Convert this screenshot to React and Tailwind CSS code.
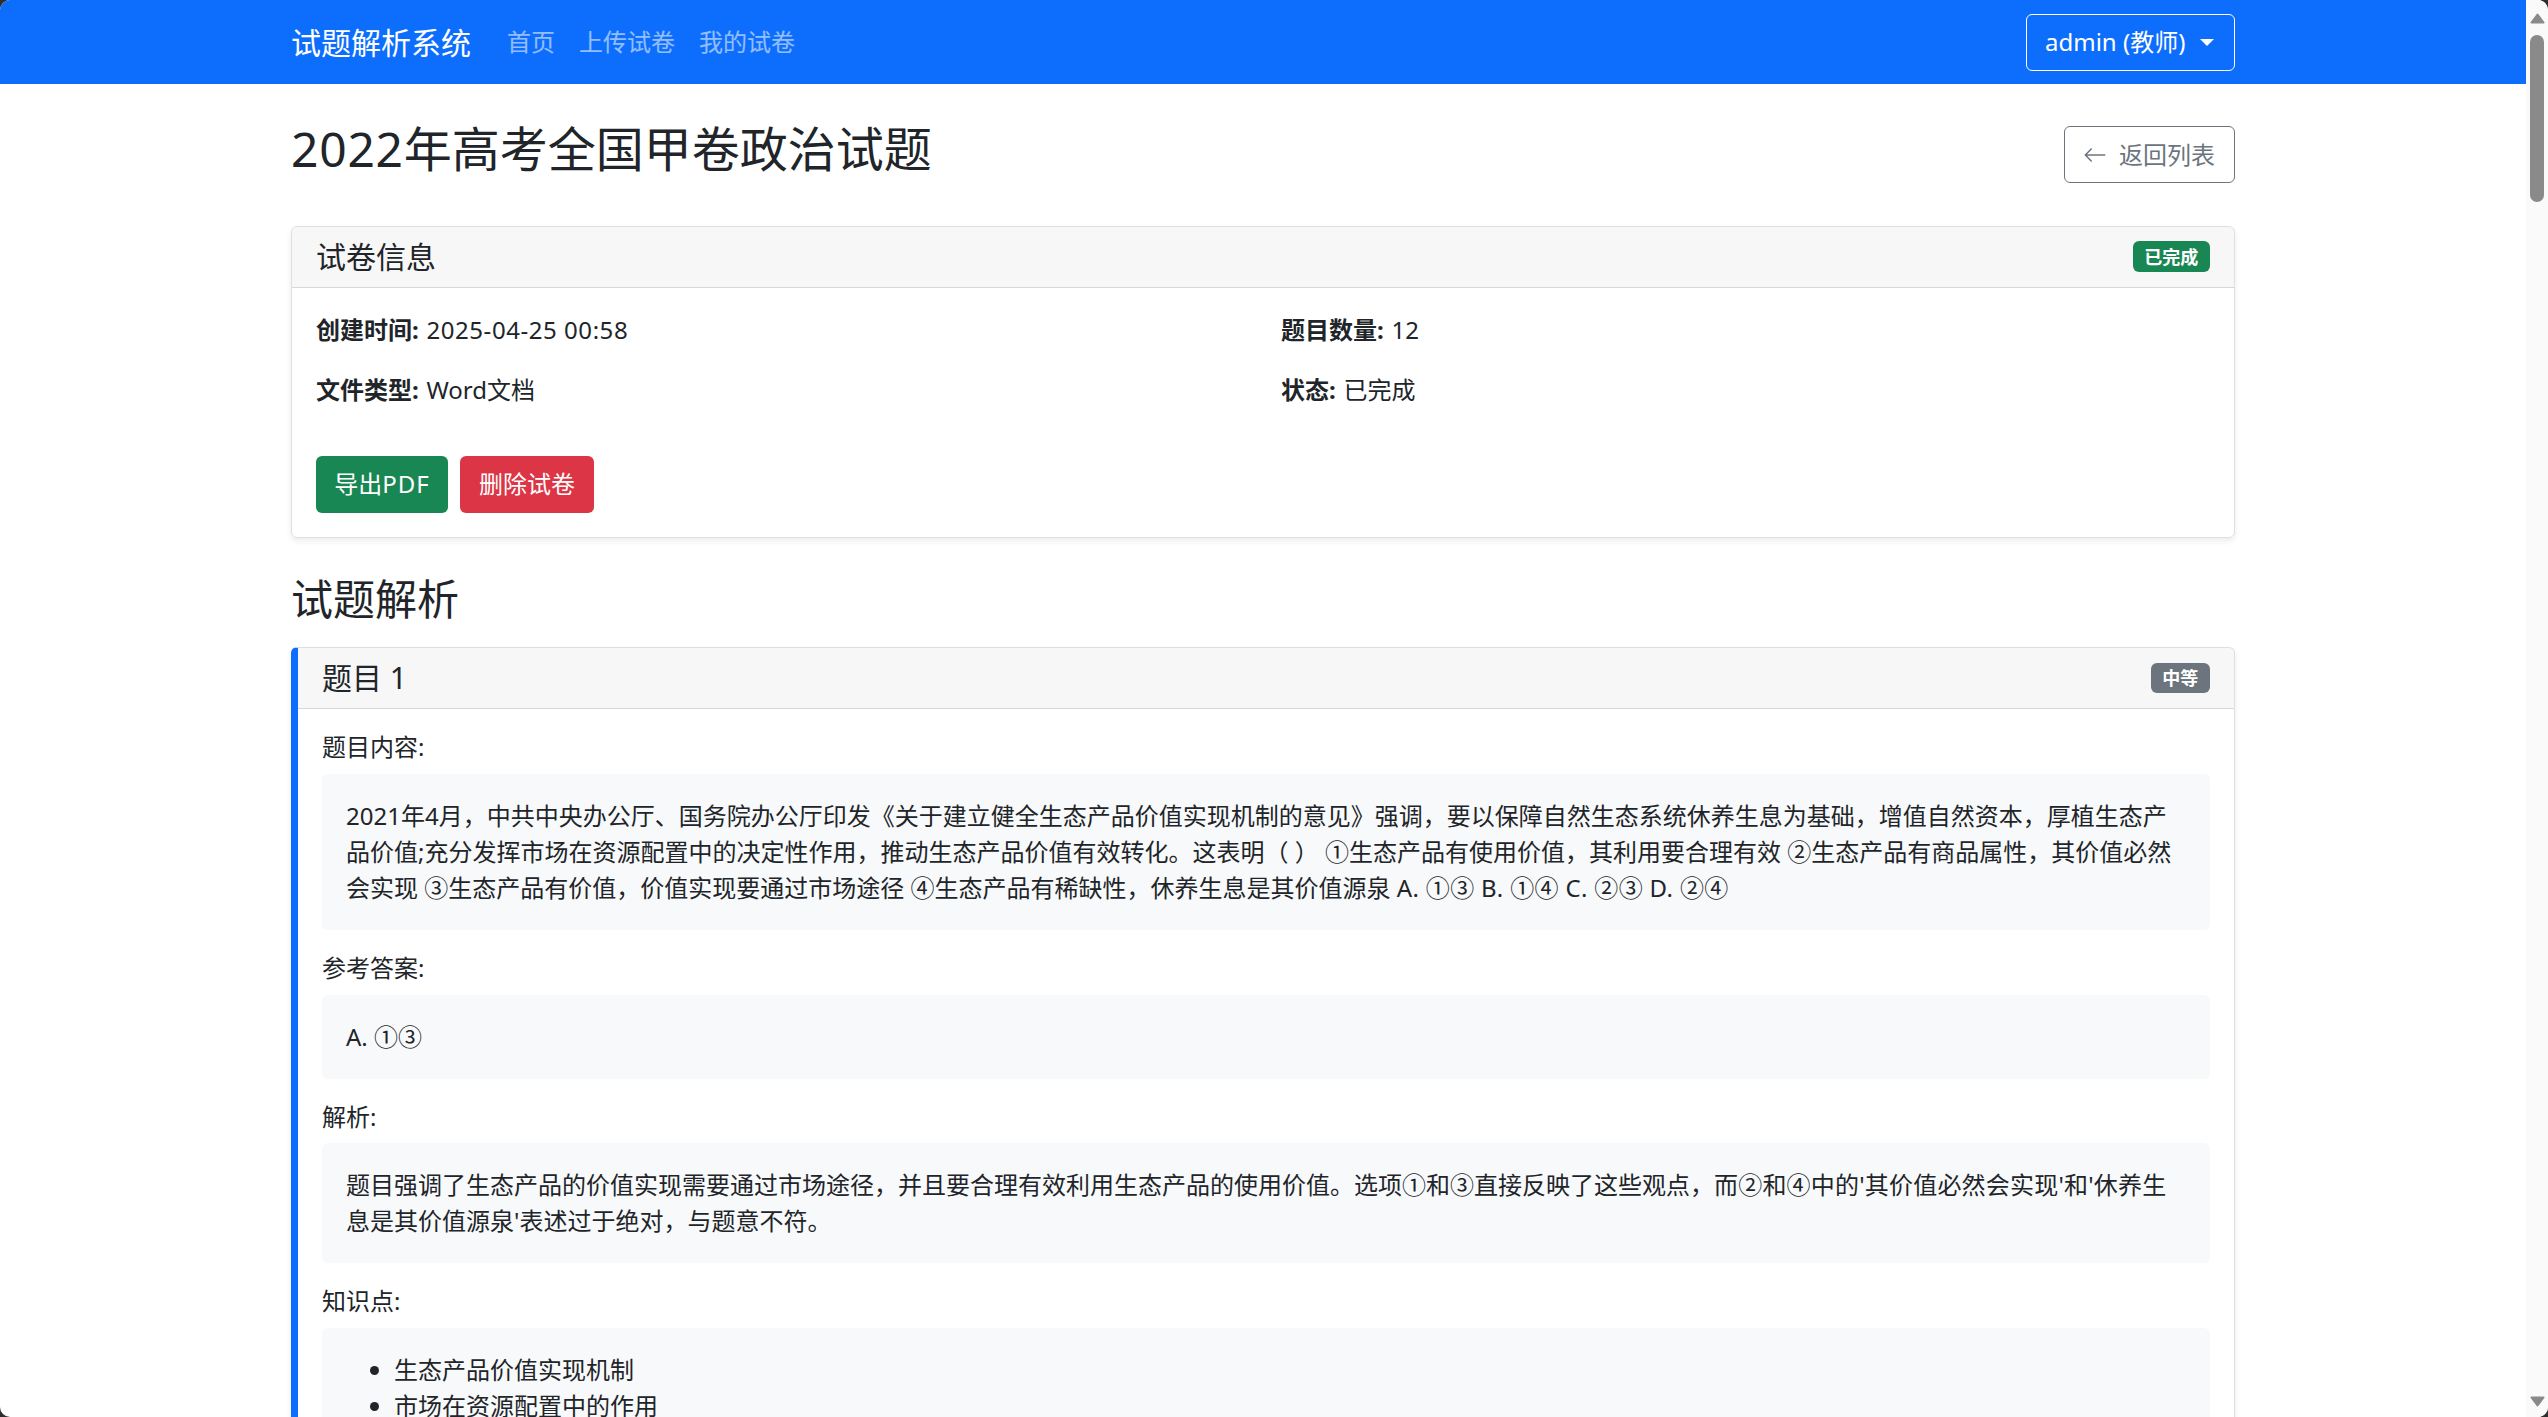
import { BsArrowLeft } from 'react-icons/bs'

const stack = "font-['Noto_Sans','Noto_Sans_CJK_SC',sans-serif]"

const ScrollBar = () => (
  <div className="flex h-full w-[22px] shrink-0 flex-col items-center bg-[#fafafa]">
    <svg width="15" height="11" viewBox="0 0 15 11" className="mt-[13px] shrink-0"><path d="M7.5 1.5 L13.5 9.5 H1.5 Z" fill="#8a8a8a" stroke="#8a8a8a" strokeWidth="2" strokeLinejoin="round" /></svg>
    <div className="mt-[11px] h-[167px] w-[14px] shrink-0 rounded-full bg-[#8a8a8a]" />
    <div className="flex-1" />
    <svg width="15" height="11" viewBox="0 0 15 11" className="mb-[10px] shrink-0"><path d="M1.5 1.5 H13.5 L7.5 9.5 Z" fill="#8a8a8a" stroke="#8a8a8a" strokeWidth="2" strokeLinejoin="round" /></svg>
  </div>
)

const Badge = ({ color, children }) => (
  <span className={`rounded-[6px] px-[11.7px] py-[6.3px] text-[18px] leading-[18px] font-bold text-white ${color}`}>{children}</span>
)

const CardHeader = ({ title, badge, color }) => (
  <div className="flex items-center justify-between border-b border-black/[.125] bg-black/[.03] px-[24px] py-[12px]">
    <h5 className="text-[30px] leading-[36px] font-normal">{title}</h5>
    <Badge color={color}>{badge}</Badge>
  </div>
)

const Section = ({ label, children, last }) => (
  <div className={last ? '' : 'mb-[24px]'}>
    <h6 className="mb-[12px] text-[24px] leading-[28.8px] font-normal">{label}</h6>
    <div className="rounded-[6px] bg-[#f8f9fa] p-[24px]">{children}</div>
  </div>
)

const Info = ({ label, value, wide }) => (
  <p className="mb-[24px]">
    <strong className="mr-[1.5px] font-bold">{label}:</strong> <span className={wide ? 'tracking-[0.55px]' : ''}>{value}</span>
  </p>
)

export default function App() {
  return (
    <div className="h-[1417px] overflow-hidden bg-[#2e2e2e]">
      <div className={`flex h-full overflow-hidden rounded-[10px] bg-white text-[24px] leading-[36px] text-[#212529] ${stack}`}>
        <div className="min-w-0 flex-1">
          <nav className="flex h-[84px] justify-center bg-[#0d6efd] pt-[12px]">
            <div className="flex h-[60px] w-[1944px] items-center">
              <span className="mr-[24px] text-[30px] leading-[45px] text-white">试题解析系统</span>
              <a className="px-[12px] text-white/55">首页</a>
              <a className="px-[12px] text-white/55">上传试卷</a>
              <a className="px-[12px] text-white/55">我的试卷</a>
              <button className="ml-auto flex h-[57px] w-[209px] items-center rounded-[6px] border border-white pl-[18px] text-white">
                admin (教师)
                <span className="ml-[15px] h-0 w-0 border-x-[7.2px] border-t-[7.2px] border-x-transparent border-t-white" />
              </button>
            </div>
          </nav>

          <main className="mx-auto mt-[36px] w-[1944px]">
            <div className="mb-[36px] flex items-center justify-between">
              <h2 className="mb-[12px] text-[48px] leading-[57.6px] font-normal"><span className="tracking-[0.75px]">2022</span>年高考全国甲卷政治试题</h2>
              <a className="flex h-[57px] w-[171px] items-center rounded-[6px] border border-[#6c757d] pl-[18px] text-[#6c757d]">
                <BsArrowLeft className="mr-[12px] size-[24px]" />
                返回列表
              </a>
            </div>

            <div className="mb-[36px] overflow-hidden rounded-[6px] border border-black/[.125] shadow-[0_3px_6px_rgba(0,0,0,0.075)]">
              <CardHeader title="试卷信息" badge="已完成" color="bg-[#198754]" />
              <div className="p-[24px]">
                <div className="grid grid-cols-2 gap-x-[36px]">
                  <div>
                    <Info label="创建时间" value="2025-04-25 00:58" wide />
                    <Info label="文件类型" value="Word文档" />
                  </div>
                  <div>
                    <Info label="题目数量" value="12" />
                    <Info label="状态" value="已完成" />
                  </div>
                </div>
                <div className="mt-[24px] flex gap-[12px]">
                  <button className="h-[57px] w-[132px] rounded-[6px] bg-[#198754] text-white">导出<span className="tracking-[1px]">PDF</span></button>
                  <button className="h-[57px] w-[134px] rounded-[6px] bg-[#dc3545] text-white">删除试卷</button>
                </div>
              </div>
            </div>

            <h3 className="mb-[23px] text-[42px] leading-[50.4px] font-normal">试题解析</h3>

            <div className="overflow-hidden rounded-[6px] border border-l-[7px] border-black/[.125] border-l-[#0d6efd] shadow-[0_3px_6px_rgba(0,0,0,0.075)]">
              <CardHeader title="题目 1" badge="中等" color="bg-[#6c757d]" />
              <div className="p-[24px]">
                <Section label="题目内容:">
                  2021年4月，中共中央办公厅、国务院办公厅印发《关于建立健全生态产品价值实现机制的意见》强调，要以保障自然生态系统休养生息为基础，增值自然资本，厚植生态产品价值;充分发挥市场在资源配置中的决定性作用，推动生态产品价值有效转化。这表明（ ） ①生态产品有使用价值，其利用要合理有效 ②生态产品有商品属性，其价值必然会实现 ③生态产品有价值，价值实现要通过市场途径 ④生态产品有稀缺性，休养生息是其价值源泉 <span className="tracking-[0.35px]">A. ①③ B. ①④ C. ②③ D. ②④</span>
                </Section>
                <Section label="参考答案:">A. ①③</Section>
                <Section label="解析:">
                  题目强调了生态产品的价值实现需要通过市场途径，并且要合理有效利用生态产品的使用价值。选项①和③直接反映了这些观点，<span className="tracking-[0.2px]">而②和④中的'其价值必然会实现'和'休养生</span>息是其价值源泉'表述过于绝对，与题意不符。
                </Section>
                <Section label="知识点:" last>
                  <ul className="list-disc pl-[48px]">
                    <li>生态产品价值实现机制</li>
                    <li>市场在资源配置中的作用</li>
                  </ul>
                </Section>
              </div>
            </div>
          </main>
        </div>
        <ScrollBar />
      </div>
    </div>
  )
}
